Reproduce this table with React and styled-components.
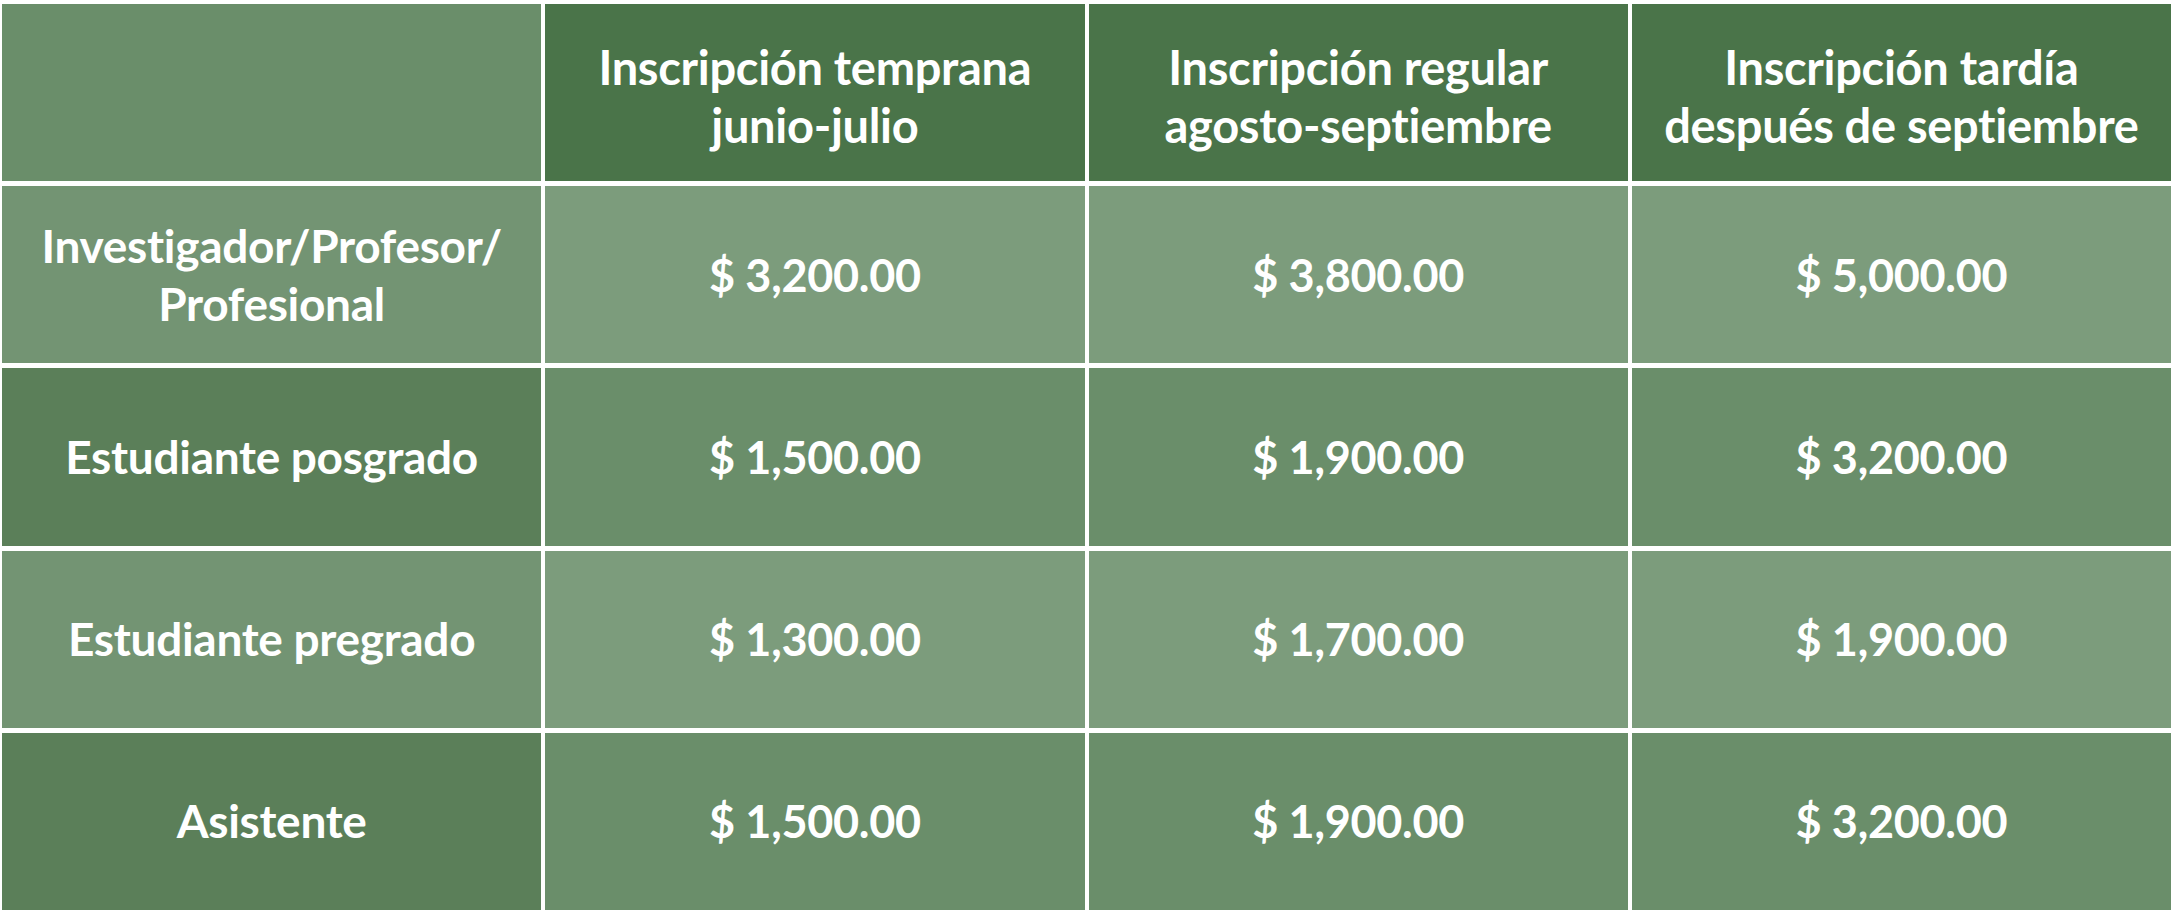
import React from "react";
import styled, { createGlobalStyle } from "styled-components";

const Global = createGlobalStyle`
  html, body { margin: 0; padding: 0; background: #ffffff; }
  body { font-family: Lato, "Open Sans", sans-serif; }
`;

const Table = styled.div`
  width: 2174px;
  height: 916px;
  box-sizing: border-box;
  padding: 4px 3px 6px 2px;
  display: grid;
  grid-template-columns: repeat(4, 1fr);
  grid-template-rows: repeat(5, 1fr);
  column-gap: 4px;
  row-gap: 5px;
  background: #ffffff;
`;

const colors = {
  corner: "#6a8e6a",
  head: "#4a7449",
  labelLight: "#739473",
  labelDark: "#5b7f59",
  light: "#7c9c7c",
  mid: "#6a8e6a",
};

const sizes = { head: "47px", label: "46px", price: "45px" };

const Cell = styled.div`
  display: flex;
  align-items: center;
  justify-content: center;
  text-align: center;
  background: ${(p) => colors[p.$tone]};
  color: #ffffff;
  font-family: Lato, "Open Sans", sans-serif;
  font-weight: 700;
  font-size: ${(p) => sizes[p.$kind || "price"]};
  line-height: 58px;
  letter-spacing: -0.3px;
  padding-top: ${(p) => (p.$kind === "head" ? "6px" : "0")};
`;

const headers = [
  ["Inscripción temprana", "junio-julio"],
  ["Inscripción regular", "agosto-septiembre"],
  ["Inscripción tardía", "después de septiembre"],
];

const rows = [
  { label: ["Investigador/Profesor/", "Profesional"], prices: ["$ 3,200.00", "$ 3,800.00", "$ 5,000.00"], light: true },
  { label: ["Estudiante posgrado"], prices: ["$ 1,500.00", "$ 1,900.00", "$ 3,200.00"], light: false },
  { label: ["Estudiante pregrado"], prices: ["$ 1,300.00", "$ 1,700.00", "$ 1,900.00"], light: true },
  { label: ["Asistente"], prices: ["$ 1,500.00", "$ 1,900.00", "$ 3,200.00"], light: false },
];

const Lines = ({ lines }) => (
  <span>
    {lines.map((l, i) => (
      <React.Fragment key={i}>
        {i > 0 && <br />}
        {l}
      </React.Fragment>
    ))}
  </span>
);

export default function App() {
  return (
    <>
      <Global />
      <Table>
        <Cell $tone="corner" />
        {headers.map((h, i) => (
          <Cell key={i} $tone="head" $kind="head">
            <Lines lines={h} />
          </Cell>
        ))}
        {rows.map((r, ri) => (
          <React.Fragment key={ri}>
            <Cell $tone={r.light ? "labelLight" : "labelDark"} $kind="label">
              <Lines lines={r.label} />
            </Cell>
            {r.prices.map((p, pi) => (
              <Cell key={pi} $tone={r.light ? "light" : "mid"} $kind="price">
                {p}
              </Cell>
            ))}
          </React.Fragment>
        ))}
      </Table>
    </>
  );
}
